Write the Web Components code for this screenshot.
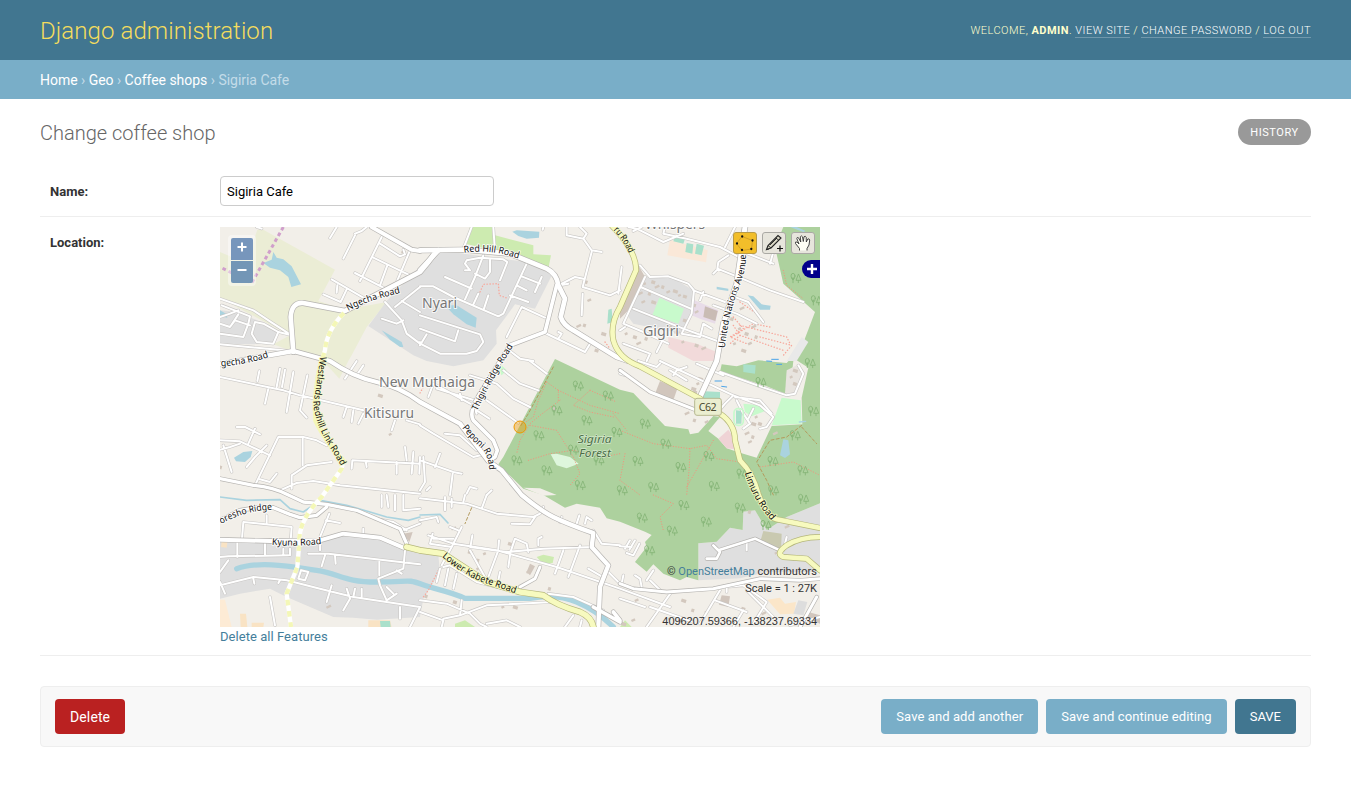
<!DOCTYPE html>
<html lang="en">
<head>
<meta charset="utf-8">
<title>Change coffee shop | Django site admin</title>
<style>
body{margin:0;background:#fff;color:#333;font:13px/19px Roboto,"Liberation Sans",sans-serif}
</style>
</head>
<body>
<admin-header>
  <span slot="brand">Django administration</span>
  <span slot="user">admin</span>
</admin-header>
<admin-breadcrumbs></admin-breadcrumbs>
<admin-content>
  <span slot="title">Change coffee shop</span>
  <form-row label="Name:"><text-field value="Sigiria Cafe"></text-field></form-row>
  <form-row label="Location:" tall><point-map></point-map></form-row>
  <submit-row></submit-row>
</admin-content>

<script>
function define(name, html, setup) {
  customElements.define(name, class extends HTMLElement {
    constructor() {
      super();
      this.attachShadow({ mode: 'open' }).innerHTML = html;
    }
    connectedCallback() { if (setup) setup(this, this.shadowRoot); }
  });
}

define('admin-header', `<style>
:host{display:flex;align-items:center;justify-content:space-between;box-sizing:border-box;height:60px;padding:0 40px;background:#417690;color:#ffc}
h1{margin:0;font-size:24px;line-height:28px;font-weight:300;letter-spacing:.08px;color:#f5dd5d;padding-top:1px}
nav{font-size:11px;line-height:13px;font-weight:300;letter-spacing:.475px;text-transform:uppercase}
b{font-weight:700}
a{color:#fff;border-bottom:1px solid rgba(255,255,255,.25)}
</style><h1><slot name="brand"></slot></h1>
<nav>Welcome, <b><slot name="user"></slot></b>. <a>View site</a> / <a>Change password</a> / <a>Log out</a></nav>`);

define('admin-breadcrumbs', `<style>
:host{display:block;box-sizing:border-box;height:39px;padding:11px 40px 0;background:#79aec8;color:#c4dce8;font-size:14px;line-height:18px;letter-spacing:-.025px}
a{color:#fff}
</style><a>Home</a> › <a>Geo</a> › <a>Coffee shops</a> › Sigiria Cafe`);

define('admin-content', `<style>
:host{display:block;padding:20px 40px}
header{display:flex;justify-content:space-between;align-items:flex-start;height:47px}
h2{margin:3px 0 0;font-size:20px;line-height:23px;font-weight:300;color:#666}
a{box-sizing:border-box;width:73px;height:26px;padding-top:1px;text-align:center;border-radius:15px;background:#999;color:#fff;font-size:11px;line-height:25px;letter-spacing:.55px;text-transform:uppercase}
</style><header><h2><slot name="title"></slot></h2><a>History</a></header><slot></slot>`);

define('form-row', `<style>
:host{display:flex;padding:10px 10px;border-bottom:1px solid #eee}
label{flex:0 0 170px;font-weight:700;line-height:15px;padding-top:8px}
:host([tall]){height:418px}
</style><label></label><slot></slot>`, (el, root) => {
  root.querySelector('label').textContent = el.getAttribute('label');
});

define('text-field', `<style>
:host{display:block}
input{display:block;box-sizing:border-box;width:274px;height:30px;margin:0;padding:5px 6px;border:1px solid #ccc;border-radius:4px;font:13px Roboto,sans-serif;color:#000;background:#fff}
</style><input type="text">`, (el, root) => {
  root.querySelector('input').value = el.getAttribute('value');
});

define('submit-row', `<style>
:host{display:flex;gap:8px;box-sizing:border-box;height:61px;margin-top:30px;padding:12px 14px;background:#f8f8f8;border:1px solid #eee;border-radius:4px}
a{box-sizing:border-box;height:35px;padding:0 15px;border-radius:4px;background:#79aec8;color:#fff;font-size:13px;line-height:35px;letter-spacing:.085px}
.del{background:#ba2121;font-size:14px;margin-right:auto;letter-spacing:.12px;padding-top:1px}
.main{background:#417690;text-transform:uppercase;letter-spacing:0}
</style><a class="del">Delete</a><a>Save and add another</a><a>Save and continue editing</a><a class="main">Save</a>`);

/* Map geometry, in units of a third of a pixel. */
const AREAS = [
  ['#ebedd5', '130,8 345,128 295,222 375,248 500,225 440,300 395,385 385,402 358,455 310,402 215,372 160,352 210,325 0,213 0,75 35,90 95,60 112,8'],
  ['#dfdfdf', '600,118 655,70 920,105 1000,140 993,150 945,245 885,232 828,310 830,350 790,400 700,418 620,402 580,385 445,297 500,222'],
  ['#dfdfdf', '0,250 50,255 100,275 150,295 175,318 155,352 0,350'],
  ['#dfdfdf', '0,935 300,935 380,920 480,935 550,965 655,985 660,1035 610,1115 600,1170 470,1178 400,1172 340,1170 200,1110 150,1085 60,1100 0,1115'],
  ['#dfdfdf', '1435,949 1490,944 1530,902 1568,909 1570,854 1605,850 1640,909 1700,870 1800,829 1800,1035 1640,1035 1560,1054 1435,1060'],
  ['#dfdfdf', '1275,150 1345,145 1420,190 1415,250 1385,320 1240,290 1225,270'],
  ['#d1c6bd', '1250,105 1275,150 1225,250 1200,275 1200,232 1252,130'],
  ['#cdebb0', '750,0 815,0 825,25 940,55 940,82 993,85 985,125 900,95 830,72 735,50'],
  ['#c8facc', '1318,212 1392,245 1375,290 1297,265'],
  ['#e8dce8', '1420,218 1495,250 1485,290 1440,275 1415,265'],
  ['#f2dada', '1345,330 1430,350 1490,375 1480,402 1420,402 1345,362'],
  ['#add19e', '1005,396 1200,488 1240,498 1335,597 1405,607 1410,622 1435,617 1480,567 1500,570 1465,612 1495,635 1520,664 1560,677 1610,692 1655,597 1747,592 1745,512 1765,422 1730,400 1785,255 1690,170 1665,60 1690,0 1800,0 1800,829 1700,870 1640,909 1605,850 1570,854 1568,909 1530,902 1490,944 1435,949 1435,1060 1400,1050 1380,1060 1330,1040 1300,1012 1280,1034 1245,1005 1280,960 1275,945 1295,924 1275,914 1200,884 1160,874 1140,842 1070,830 1035,842 970,804 910,785 835,712 850,690 900,595'],
  ['#add19e', '1505,412 1550,418 1615,400 1700,408 1722,385 1718,420 1695,500 1640,478 1560,452 1500,435'],
  ['#f2efe9', '910,782 960,784 1010,804 970,806'],
  ['#e8e4df', '1700,430 1740,410 1748,440 1720,500 1695,500'],
  ['#c8facc', '1685,512 1742,520 1745,590 1655,595'],
  ['#c8facc', '1570,530 1620,535 1635,552 1595,568 1575,555'],
  ['#def6dc', '992,682 1010,680 1050,690 1076,710 1040,724 1010,715'],
  ['#efd3d5', '1525,608 1495,635 1520,664 1545,667 1540,630'],
  ['#fae8d8', '1350,38 1463,70 1458,106 1342,85'],
  ['#aae0cb', '1365,28 1395,35 1390,50 1360,43'], ['#aae0cb', '1430,50 1452,56 1445,85 1425,80'],
  ['#aae0cb', '1400,48 1420,52 1417,80 1396,75'],
  ['#aae0cb', '1440,492 1500,495 1500,520 1440,515'], ['#aae0cb', '1570,412 1607,415 1605,440 1570,435'],
  ['#aae0cb', '1548,550 1566,552 1564,590 1548,590'],
  ['#d1c6bd', '1320,462 1372,485 1358,525 1305,500'], ['#c9bcb4', '1455,238 1493,252 1486,282 1450,270'],
  ['#c9c9b0', '1630,912 1685,920 1683,970 1650,955 1622,940'],
  ['#d1c6bd', '1505,1105 1530,1108 1525,1140 1497,1133'], ['#d1c6bd', '930,1010 945,1018 930,1045 920,1035'],
  ['#cdebb0', '950,990 970,983 1002,990 998,1008 970,1012'], ['#cdebb0', '705,1190 735,1180 765,1200 705,1200'],
  ['#cdebb0', '1200,1200 1215,1180 1235,1200'],
  ['#fbe6c9', '1642,1118 1680,1112 1695,1130 1728,1125 1722,1160 1680,1162'],
  ['#fdebd5', '0,1118 15,1118 35,1200 0,1200'], ['#f9e3c4', '445,1180 510,1180 515,1200 445,1200'],
  ['#aae0cb', '480,1182 510,1182 512,1200 482,1200'],
  ['#f9e3c4', '5,945 22,945 20,962 3,960'], ['#f9e3c4', '60,1160 78,1160 82,1200 62,1200'], ['#f9e3c4', '95,1187 132,1187 130,1200 95,1200'],
  ['#c8facc', '830,425 845,415 860,430 845,445'], ['#e9e9e9', '1745,330 1765,345 1730,402 1700,402'],
  ['#d1c6bd', '1765,1155 1800,1165 1800,1190 1760,1172'], ['#d1c6bd', '550,920 578,915 568,945'],
  ['#ddd', '1735,1120 1762,1125 1750,1165 1720,1160'],
  ['#aae0cb', '1165,248 1175,245 1178,285 1162,290']
];
const WATER = [
  '130,108 155,98 160,75 170,92 190,97 215,118 243,172 214,180 205,150 180,130 150,122',
  '485,310 545,345 550,360 540,360 510,338',
  '675,235 710,235 770,272 767,302 740,292 700,262',
  '877,14 890,10 958,14 957,32 920,35 895,27',
  '1583,205 1600,208 1625,232 1652,236 1650,248 1620,248',
  '1490,179 1525,185 1525,192 1490,187',
  '42,692 70,675 97,672 92,690 75,705 48,703',
  '1690,637 1705,640 1710,682 1695,693 1680,685', '0,250 20,262 22,272 0,268', '15,402 40,395 45,402',
  '1710,0 1730,0 1757,12 1750,15'
];
const STREAMS = [
  [5, 'M0,810 80,820 180,818 210,845 250,855 300,820 380,835 450,855 500,870 565,880 600,870'],
  [16, 'M50,1025 C120,1000 220,1020 290,1030 S370,1065 470,1065 S560,1055 605,1072 S680,1090 735,1114 H930 Q1010,1100 1070,1125 T1180,1200'],
  [5, 'M600,864 660,862 684,888'], [4, 'M1738,585 1757,583'], [3, 'M1485,462 1505,462 M1505,478 1520,480 M1640,402 1655,403 M1670,412 1685,412 M1655,397 1675,397']
];
const MINOR = [
  'M110,0 125,5 M0,215 100,250 160,290 215,325 M5,235 90,268 85,290 70,330 0,320 M30,300 45,280 90,295 M105,285 95,320 110,345 160,350 175,315 130,290 105,285 M0,270 30,260 55,250 M55,262 30,300 0,290 M175,315 215,325 M0,352 215,372',
  'M350,0 330,33 M405,25 370,95 M440,0 425,12 405,20 M485,30 420,162 M480,50 540,88 555,82 550,68 M460,92 570,145 M570,70 532,160 M502,115 480,175 M405,138 490,182 M335,157 435,215 M380,187 362,225 310,202 M352,175 350,197',
  'M495,225 545,280 560,320 600,350 M525,240 600,180 M485,275 530,290 550,280 M545,222 600,255',
  'M755,0 730,65 M820,0 825,75 M790,85 765,150 735,217 M735,110 740,100 780,92 850,97 862,105 840,160 M735,110 750,130 735,130 M810,98 810,135 795,155 765,140 M675,150 755,185 M600,178 640,178 700,210 835,268 850,260 920,110 M600,265 780,322 790,345 770,372 740,380 660,380 605,352 600,345 M600,305 705,343 715,310 M620,322 600,355 M775,200 760,232 M805,205 792,245 M890,175 920,190 M905,148 960,170 M965,150 945,195 M870,205 925,225 M975,272 905,240 860,330 M1040,0 1040,25 1090,35 1100,20 1080,0 M1090,35 1115,70 1145,75 M1115,75 1088,180 1170,205 1200,190 M1088,200 1085,265 M1015,175 1065,150 1090,155 M1020,175 1045,170 M975,318 1095,375 1110,350 M1015,335 1025,320 1015,315 M870,372 900,395 940,402 M1205,120 1195,200 M970,0 968,8',
  'M1225,0 1250,5 1330,45 1390,20 M1265,0 1240,12 M1335,0 1330,20 1400,35 1500,60 1560,92 1570,75 1660,110 M1525,85 1495,105 1492,125 1550,148 1650,190 1750,225 M1495,125 1480,140 M1545,0 1515,60',
  'M1260,115 1290,150 1345,148 1405,170 1422,190 1415,260 1385,320 M1262,180 1412,245 M1240,245 1390,305 1500,345 M1275,150 1210,290 1270,315 1345,350 M1420,190 1515,225 M1450,195 1440,220 M1210,350 1290,380 1280,402 M1215,300 1200,310 M1310,375 1325,345 M1385,320 1440,330 1450,290 1475,305 M1480,235 1550,260 1610,290 M1550,212 1585,225 1630,285 M1660,75 1650,110',
  'M0,450 190,490 M190,490 240,505 430,550 M118,432 112,462 M145,485 135,530 M180,425 170,480 M195,428 186,480 M220,435 200,555 M262,445 240,550 260,572 M410,402 375,455 M430,415 410,445 M0,640 60,643 150,685 M50,600 75,600 120,622 M105,605 85,650 M0,668 30,660 60,650 M10,655 35,735 M140,655 105,690 80,720 M175,630 105,775 M175,630 250,630 290,640 320,655 M248,635 248,715 M170,740 150,765 120,757 M335,705 260,715 215,745 215,785 M380,540 370,570 M400,550 395,585 M430,560 415,590 M525,580 515,610 M395,725 397,700 600,710 M437,702 440,720 M530,705 530,740 M555,660 560,700 M580,675 575,740 M600,690 598,740 M180,790 230,768 280,762 360,775 600,800',
  'M625,510 640,470 760,535 770,560 M650,485 780,525 M720,500 725,520 M750,445 830,470 880,515 930,540 M800,520 895,588 M850,430 900,470 955,490 M930,402 980,440 M770,550 808,575 M600,595 640,620 760,690 800,680 M675,620 720,625 770,670 M600,700 700,735 725,740 M660,680 645,720 M610,690 615,765 600,790 M698,740 690,804 M620,790 630,780 M740,800 750,780 770,785 M800,804 815,790 M560,580 600,592',
  'M0,990 25,988 205,985 M66,935 70,885 215,900 212,940 M140,865 140,890 M52,945 52,990 M0,1035 25,1000 M135,945 135,985 M190,965 190,985 M210,965 210,985 M265,980 325,980 600,1012 M328,860 300,930 300,970 M318,880 360,888 M315,985 305,1018 M345,985 347,1010 M430,905 430,920 M555,970 550,1025 475,1055 480,1075 500,1120 M478,1005 478,1045 M530,1030 545,1040 M0,1075 100,1050 200,1060 300,1085 400,1110 600,1140 M100,1055 103,1070 M180,1060 175,1068 M0,1065 15,1100 M335,1075 320,1125 M380,1085 390,1115 370,1150 M405,1085 400,1110 M425,1085 425,1110 M540,1140 540,1175 M600,1140 570,1200 M500,1120 530,1100 M520,1100 500,1080 M150,1110 165,1195 M485,804 485,840 M500,804 505,840 M525,804 525,850 M550,804 550,850 600,845 M465,875 520,885 560,910 M550,910 600,890 M243,1030 235,1055 255,1060 265,1035 243,1030',
  'M600,814 740,830 830,860 940,870 960,860 970,840 M675,810 675,850 M695,815 695,840 M735,804 730,825 M800,804 785,845 M875,890 930,892 945,870 M600,880 650,870 655,885 M725,900 695,960 665,1015 M690,900 715,910 M625,925 700,950 830,970 1010,1020 1200,1085 1350,1140 M638,920 630,950 695,960 M640,935 700,935 M757,925 752,955 M750,960 860,975 970,965 1120,960 M870,985 865,1020 M870,980 885,935 920,950 925,975 M955,955 955,935 965,930 M835,970 805,1050 M1080,955 1045,1050 M1030,970 1005,1040 M837,940 835,965 M670,1020 690,1015 770,1065 830,1080 M660,1025 650,1065 M685,1025 675,1075 M710,1040 700,1085 M800,1060 750,970 M840,1035 835,1060 M1105,1025 1145,1048 M1165,1035 1200,1070 M600,1120 680,1130 750,1160 780,1190 800,1200 M600,1155 670,1180 665,1200 M670,1175 720,1165 800,1135 1000,1125 M725,1120 720,1165 M800,1190 860,1180 900,1200 M1060,1165 1035,1200 M985,1100 1060,1110 1150,1150 M1020,885 1025,870 M1070,890 1078,865 M1095,890 1100,870 1115,880 M1120,910 1145,950 1200,955 M1085,1180 1080,1200',
  'M1200,958 1235,960 M1220,978 1240,985 1258,950 M1215,965 1230,940 M1228,968 1245,940 M1265,1080 1260,1055 1245,1045 M1280,1060 1300,1030 M1210,1045 1205,1070',
  'M1325,1094 1290,1060 M1355,1094 1280,1200 M1275,1140 1200,1115 M1500,1090 1440,1190 M1485,1120 1580,1155 M1520,1095 1520,1080 1570,1075 1640,1125 M1580,1090 1660,1170 M1640,1125 1600,1190 M1580,970 1580,945 M1700,930 1690,970 M1290,1140 1420,1185 M1540,1200 1570,1150 M1710,1195 1800,1170',
  'M1200,440 1215,445 M1255,402 1310,420 1320,410 M1320,402 1540,505 1620,535 1660,570 1640,600 1620,605 M1350,430 1400,460 M1360,445 1370,430 1400,420 M1540,505 1515,530 1490,560 M1550,520 1570,560 1590,590 1570,605 M1430,410 1510,445 M1600,545 1585,575 M1500,435 1640,485 1700,505 1725,500 1750,440 1735,415 M1545,510 1620,520 1655,560'
];
const MAJOR = [
  [12, 'M455,0 575,68 600,72'],
  [14, 'M220,375 212,270 Q215,225 250,228 L375,252 600,135 625,105 650,70 M600,70 735,68'],
  [14, 'M600,130 655,70'],
  [14, 'M735,68 870,80 980,125 Q1010,140 1015,175 L1035,215 1022,270 Q1030,295 1060,310 L1190,390 1225,402'],
  [11, 'M1010,175 975,315 870,355 780,500 Q745,555 760,580 L820,640 832,670 825,690 805,702'],
  [13, 'M0,412 130,388 220,372 330,402 Q400,450 470,465 T600,525 L720,590 805,702 845,730 905,804 Q960,850 1000,870 T1120,918 L1115,960 1165,1015 1140,1080 1135,1200'],
  [9, 'M1200,430 1290,495 1430,550 1500,530'],
  [15, 'M1575,0 1550,170 1510,290 1490,402 1440,510'],
  [10, 'M0,755 100,775 Q160,780 205,804 L250,825 320,832 410,850 540,905 560,950'],
  [10, 'M0,880 60,850 120,840 160,842 210,862 240,872 290,865 320,840'],
  [12, 'M0,938 150,942 300,940 370,920 480,932 550,962'],
  [9, 'M900,1080 945,1055 960,1020'],
  [9, 'M1200,1070 1240,1085 1340,1095 1480,1085 1620,1055 1740,1060 1800,1055'],
  [8, 'M1270,970 1290,975 1400,935 1480,970'],
  [11, 'M1180,1155 1200,1180 M1120,1140 1200,1185'], [9, 'M1790,1110 1740,1200']
];
MAJOR[13][1] = 'M1460,995 1490,995 1500,975 1480,955 M1495,970 1605,935 1680,970';
const YELLOW = [
  [14, 'M1170,-10 Q1250,70 1248,130 L1200,240 Q1170,290 1180,340 Q1195,395 1260,418 L1440,515 1500,560 Q1545,590 1545,640 L1560,700 Q1600,740 1615,800 Q1640,870 1670,877 L1800,903'],
  [14, 'M1800,930 Q1740,930 1700,955 Q1665,980 1690,990 L1760,995 1800,1030'],
  [16, 'M560,960 600,970 670,980 800,1065 900,1095 970,1105 Q1010,1135 1080,1155 Q1115,1170 1120,1200']
];
const TRAILS = 'M980,465 1015,490 1015,520 M980,465 955,520 940,570 910,590 M1015,490 1110,535 1200,560 M1020,520 960,565 930,590 900,640 890,680 M1110,490 1060,535 1110,555 1180,570 M1110,490 1190,525 M930,595 1010,610 1060,690 1080,740 1050,775 M925,700 990,680 1060,670 1150,690 1200,680 M1200,610 1300,650 1410,665 1460,655 1490,695 1560,705 M1410,665 1408,720 1400,804 M1215,680 1200,760 1260,804 M1300,804 1360,830 1320,870 1330,910 M1480,640 1400,780 M1620,720 1720,705 1800,745 M1180,560 1220,610 M1690,130 1700,175 1750,215 M1690,60 1700,40';
const DASHES = 'M1540,270 1570,305 1530,330 1580,350 M1535,330 1600,290 1650,300 M1560,295 1700,330 1710,350 M1620,330 1715,355 1690,385 M1560,325 1690,370 M1560,225 1610,260 M1540,295 1560,325 1530,350 M780,195 790,172 835,170 838,205 865,215 M655,1030 625,1090 610,1110 M600,498 610,480 M1155,345 1170,365';
const TREES = [[1074,476],[1164,506],[1010,550],[1100,580],[956,625],[1060,668],[890,700],[980,730],[1136,700],[1080,774],[1190,615],[1275,590],[1337,650],[1253,702],[1382,720],[1466,687],[1565,740],[1300,780],[1482,777],[1658,702],[1748,730],[1725,625],[1780,552],[1622,465],[1727,153],[1788,220],[1206,790],[1266,872],[1356,911],[1458,884],[1391,834],[1560,842],[1750,816],[1637,894],[1288,970],[1660,790],[1770,408]];
const BUILDINGS = [[1275,170],[1300,165],[1310,180],[1330,180],[1345,195],[1365,192],[1380,205],[1395,208],[1260,200],[1290,200],[1270,225],[1300,225],[1220,320],[1245,330],[1255,350],[1280,335],[1350,300],[1370,315],[1390,345],[1430,355],[1450,365],[1425,235],[1430,255],[1395,280],[1560,305],[1580,320],[1600,300],[1610,330],[1590,350],[1570,370],[1545,350],[1535,275],[1565,245],[1100,165],[1108,220],[1150,320],[1155,365],[1130,370],[1075,298],[1095,295],[550,75],[480,505],[512,622],[0,720],[325,1140],[775,1000],[775,1025],[750,975],[795,980],[870,950],[925,1035],[990,1085],[915,1110],[885,1140],[850,1140],[705,1125],[700,905],[620,1108],[1250,1120],[1390,1120],[1460,1155],[1570,1145],[1630,1160],[1420,1150],[1240,1180],[1210,1190],[1350,1175],[1380,1180],[1700,900],[1590,855],[1670,978],[1600,590],[1610,570],[1620,590],[1580,620],[1600,630],[1590,645],[1420,485],[1435,470],[1425,495],[1400,560],[1425,580],[1460,585],[1725,430],[1715,450],[1725,470],[1665,620],[1005,546],[1340,510],[1440,455]];
/* path, text, length, true where the label lies on a yellow road */
const LABELS = [
  ['M732,77 Q800,68 858,84 T935,109', 'Red Hill Road', 166], ['M385,252 Q430,225 540,198', 'Ngecha Road', 166],
  ['M3,418 Q70,415 148,390', 'gecha Road', 146],
  ['M301,388 Q290,470 280,530 Q285,590 326,655 T364,722', 'Westlands Redhill Link Road', 350, true],
  ['M772,552 Q798,490 878,360', 'Thigiri Ridge Road', 222], ['M726,602 Q755,640 780,660 T808,734', 'Peponi Road', 156],
  ['M1514,364 Q1526,262 1554,190 T1577,82', 'United Nations Avenue', 290], ['M1180,10 Q1213,42 1232,92', 'ru Road', 84, true],
  ['M1574,738 Q1598,820 1658,884', 'Limuru Road', 165, true],
  ['M4,891 Q70,852 158,848', 'oresho Ridge', 160], ['M155,953 Q230,960 305,951', 'Kyuna Road', 150],
  ['M666,989 Q730,1045 790,1066 T888,1100', 'Lower Kabete Road', 248, true]
];

function mapSvg() {
  const line = (w, d, c, extra = '') => `<path d="${d}" stroke="${c}" stroke-width="${w}" ${extra}/>`;
  let s = AREAS.map(([c, p]) => `<polygon fill="${c}" points="${p}"/>`).join('');
  s += WATER.map(p => `<polygon fill="#aad3df" points="${p}"/>`).join('');
  s += BUILDINGS.map(([x, y], i) => `<rect x="${x - 6}" y="${y - 4}" width="${9 + i % 3 * 3}" height="${7 + i % 2 * 3}" fill="#d3c8be" transform="rotate(${i % 2 ? 18 : -25} ${x} ${y})"/>`).join('');
  s += '<g fill="none" stroke-linecap="round" stroke-linejoin="round">';
  s += STREAMS.map(([w, d], i) => line(w, d, i > 3 ? '#4aa3e8' : '#aad3df')).join('');
  s += line(3, TRAILS, '#f0957d', 'stroke-dasharray="1 7"') + line(4, DASHES, '#f7a89c', 'stroke-dasharray="1 8"');
  s += line(3, 'M755,842 735,890 M1000,420 925,560 900,600 M1745,595 1700,630 1650,640 1610,705 1640,760 1660,804 M1745,600 1790,650', '#b39a5d', 'stroke-dasharray="9 7"');
  s += MINOR.map(d => line(9.5, d, '#c9c7c5')).join('') + MINOR.map(d => line(6, d, '#fff')).join('');
  s += MAJOR.map(([w, d]) => line(w + 4, d, '#b5b3b0')).join('') + MAJOR.map(([w, d]) => line(w, d, '#fff')).join('');
  s += YELLOW.map(([w, d]) => line(w + 4, d, '#b5b77a')).join('') + YELLOW.map(([w, d]) => line(w, d, '#f7fabf')).join('');
  const link = 'M372,258 Q320,310 315,370 L305,402 Q280,500 287,580 Q310,630 370,700 L365,725 305,810 Q235,880 238,945 L232,1020 200,1100 213,1200';
  s += line(13, link, '#fff', 'stroke-linecap="butt"') + line(13, link, '#f4f7b7', 'stroke-dasharray="17 17" stroke-linecap="butt"');
  s += line(15, 'M305,398 Q280,500 287,580 Q310,630 370,705', '#f4f7b7');
  s += line(9, 'M190,0 95,168 0,120', '#d09fcb', 'stroke-dasharray="11 9" stroke-linecap="butt"');
  s += TREES.map(([x, y]) => `<g transform="translate(${x - 15} ${y - 15})" stroke="#85b577" stroke-width="2.6"><path d="M7 29V14M3 17l4 4 4-4M23 29V22M23 4l-7 18h14z"/><ellipse cx="7" cy="9" rx="6" ry="8"/></g>`).join('');
  s += '<rect x="1542" y="545" width="28" height="50" rx="12" stroke="#c8facc" stroke-width="5"/></g>';
  const halo = c => `stroke="${c}" stroke-opacity=".8" stroke-width="6" stroke-linejoin="round" paint-order="stroke"`;
  LABELS.forEach(([d, t, len, yellow], i) => {
    s += `<path id="l${i}" d="${d}" fill="none"/><text font-size="28" fill="#111" ${halo(yellow ? '#f7fabf' : '#fff')}><textPath href="#l${i}" textLength="${len}" lengthAdjust="spacingAndGlyphs">${t}</textPath></text>`;
  });
  [['Nyari',606,242,105],['Gigiri',1269,326,108],['Kitisuru',432,573,150],['New Muthaiga',477,479,288],['Whispers',1275,6,180]].forEach(([t, x, y, len]) => {
    s += `<text x="${x}" y="${y}" font-size="42" fill="#777" textLength="${len}" lengthAdjust="spacingAndGlyphs" ${halo('#fff')}>${t}</text>`;
  });
  s += `<g font-size="35" font-style="italic" fill="#4b6e48" stroke="#d4e8cb" stroke-width="4" paint-order="stroke"><text x="1073" y="648" textLength="102" lengthAdjust="spacingAndGlyphs">Sigiria</text><text x="1077" y="691" textLength="96" lengthAdjust="spacingAndGlyphs">Forest</text></g>`;
  s += `<rect x="1424" y="514" width="80" height="51" rx="7" fill="#ebeed0" stroke="#b7b991" stroke-width="3"/><text x="1436" y="552" font-size="32" fill="#4c4c32" textLength="54">C62</text>`;
  s += `<circle cx="900" cy="600" r="18" fill="#ee9900" fill-opacity=".4" stroke="#ee9900" stroke-width="3"/>`;
  return `<svg class="map" viewBox="0 0 1800 1200" font-family="'Noto Sans',sans-serif">${s}</svg>`;
}

define('point-map', `<style>
:host{display:block;width:600px}
.frame{position:relative;width:600px;height:400px;overflow:hidden;background:#f2efe9}
.map{display:block;width:600px;height:400px}
.zoom{position:absolute;left:8px;top:8px;padding:3px;border-radius:4px;background:rgba(255,255,255,.4);display:grid;gap:1px}
.zoom svg{display:block;width:22px;height:22px;background:#7796bc}
.zoom svg:first-child{border-radius:2px 2px 0 0}.zoom svg:last-child{border-radius:0 0 2px 2px;background:#7396b6}
.tools{position:absolute;right:5px;top:5px;display:flex;gap:5px}
.tools svg{display:block;width:24px;height:22px}
.switch{position:absolute;right:0;top:33px;width:18px;height:18px;border-radius:9px 0 0 9px;background:#00008b}
.credit{position:absolute;right:3px;font-size:11px;line-height:14px;white-space:nowrap;color:#333}
.credit a{color:#447e9b}
.clear{display:block;color:#447e9b;line-height:19px;letter-spacing:.05px}
</style>
<div class="frame">${mapSvg()}
<div class="zoom"><svg viewBox="0 0 22 22"><path d="M6.500 9H15.500M11 4.500V13.500" stroke="#fff" stroke-width="2"/></svg><svg viewBox="0 0 22 22"><path d="M6.500 9H15.500" stroke="#fff" stroke-width="2"/></svg></div>
<div class="tools">
<svg viewBox="0 0 24 22"><rect x=".5" y=".5" width="23" height="21" rx="2.500" fill="#f2be2a" stroke="#b99b46"/><path d="M3.500 11.500 9 4.500 19.500 8.500 18.500 17 9 18.500z" fill="none" stroke="#c99829" stroke-width=".8"/><g fill="#111"><circle cx="4" cy="11.500" r="1.150"/><circle cx="9.200" cy="4.500" r="1.150"/><circle cx="19.500" cy="8.500" r="1.150"/><circle cx="18.300" cy="17" r="1.150"/><circle cx="9" cy="18" r="1.150"/></g></svg>
<svg viewBox="0 0 24 22"><rect x=".5" y=".5" width="23" height="21" rx="2.500" fill="#e7e5dc" stroke="#aaa9a4"/><path d="M4.500 17.500 6 13.500 16 3.500 19 6 9 16z" fill="#d9d6c4" stroke="#222" stroke-width="1.100"/><path d="M6 13.500 9 16M14 6 17 8.500M4.500 17.500 7 17M8 13l7-7" stroke="#222" fill="none" stroke-width=".9"/><path d="M15 16.500h6M18 13.500v6" stroke="#111" stroke-width="1.200"/></svg>
<svg viewBox="0 0 24 22"><rect x=".5" y=".5" width="23" height="21" rx="2.500" fill="#e7e5dc" stroke="#aaa9a4"/><path d="M8.500 18.500V16.500L4.500 11.500Q3.800 9.500 6 10L8 12 5.800 6.500Q6 4.700 7.500 5.800L9.800 10 9.300 4.800Q10.300 3 11.500 4.800L12.300 9.500 13 4.800Q14.300 3.500 15.200 5.200L15.300 10 16.800 7Q18.300 6.200 18.700 8L18 13 16 16.500V18.500" fill="#fffff5" stroke="#333" stroke-width=".9"/></svg>
</div>
<svg class="switch" viewBox="0 0 18 18"><path d="M5 9H15M10 4V14" stroke="#fff" stroke-width="2.400"/></svg>
<div class="credit" style="bottom:48px">© <a>OpenStreetMap</a> contributors</div>
<div class="credit" style="bottom:31px">Scale = 1 : 27K</div>
<div class="credit" style="bottom:-1px;letter-spacing:-.07px;font-family:'Liberation Sans',sans-serif">4096207.59366, -138237.69334</div>
</div><a class="clear">Delete all Features</a>`);
</script>
</body>
</html>
